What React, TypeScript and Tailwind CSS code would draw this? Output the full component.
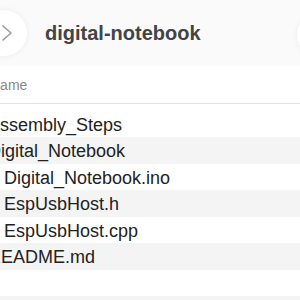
import React from "react";

const rows: { name: string; indent: boolean }[] = [
  { name: "Assembly_Steps", indent: false },
  { name: "Digital_Notebook", indent: false },
  { name: "Digital_Notebook.ino", indent: true },
  { name: "EspUsbHost.h", indent: true },
  { name: "EspUsbHost.cpp", indent: true },
  { name: "README.md", indent: false },
  { name: "", indent: false },
  { name: "", indent: false },
];

export default function App() {
  return (
    <div
      className="w-[300px] h-[300px] overflow-hidden bg-white text-[#222]"
      style={{ fontFamily: '"Liberation Sans", Arial, sans-serif' }}
    >
      <div className="h-[66px] flex items-center bg-[#fafafa] relative">
        <div className="-ml-[22px] w-[49px] h-[46px] rounded-full bg-white shadow-[0_0_6px_rgba(0,0,0,0.06)] flex items-center justify-end pr-[14px] shrink-0">
          <svg width="12" height="18" viewBox="0 0 12 18" fill="none">
            <path d="M2 2 L10 9 L2 16" stroke="#9a9a9a" strokeWidth="1.6" strokeLinecap="round" strokeLinejoin="round" />
          </svg>
        </div>
        <div className="ml-[18px] text-[20px] font-bold text-[#444] leading-[23px]">digital-notebook</div>
        <div className="absolute left-[297px] top-[12px] w-[46px] h-[46px] rounded-full bg-white shadow-[0_0_6px_rgba(0,0,0,0.06)]" />
      </div>
      <div className="h-[38px] pt-[11px] border-b border-[#e3e3e3] bg-white">
        <div className="-ml-[10px] text-[14px] leading-[16px] text-[#8a8a8a]">Name</div>
      </div>
      <div className="h-[6.5px]" />
      <div className="flex flex-col">
        {rows.map((r, i) => (
          <div
            key={i}
            className={
              "h-[26.5px] shrink-0 text-[18px] leading-[28px] whitespace-nowrap " +
              (i % 2 === 1 ? "bg-[#f4f4f4]" : "bg-white")
            }
          >
            <div className={r.indent ? "ml-[4px]" : "-ml-[12px]"}>{r.name}</div>
          </div>
        ))}
      </div>
    </div>
  );
}
